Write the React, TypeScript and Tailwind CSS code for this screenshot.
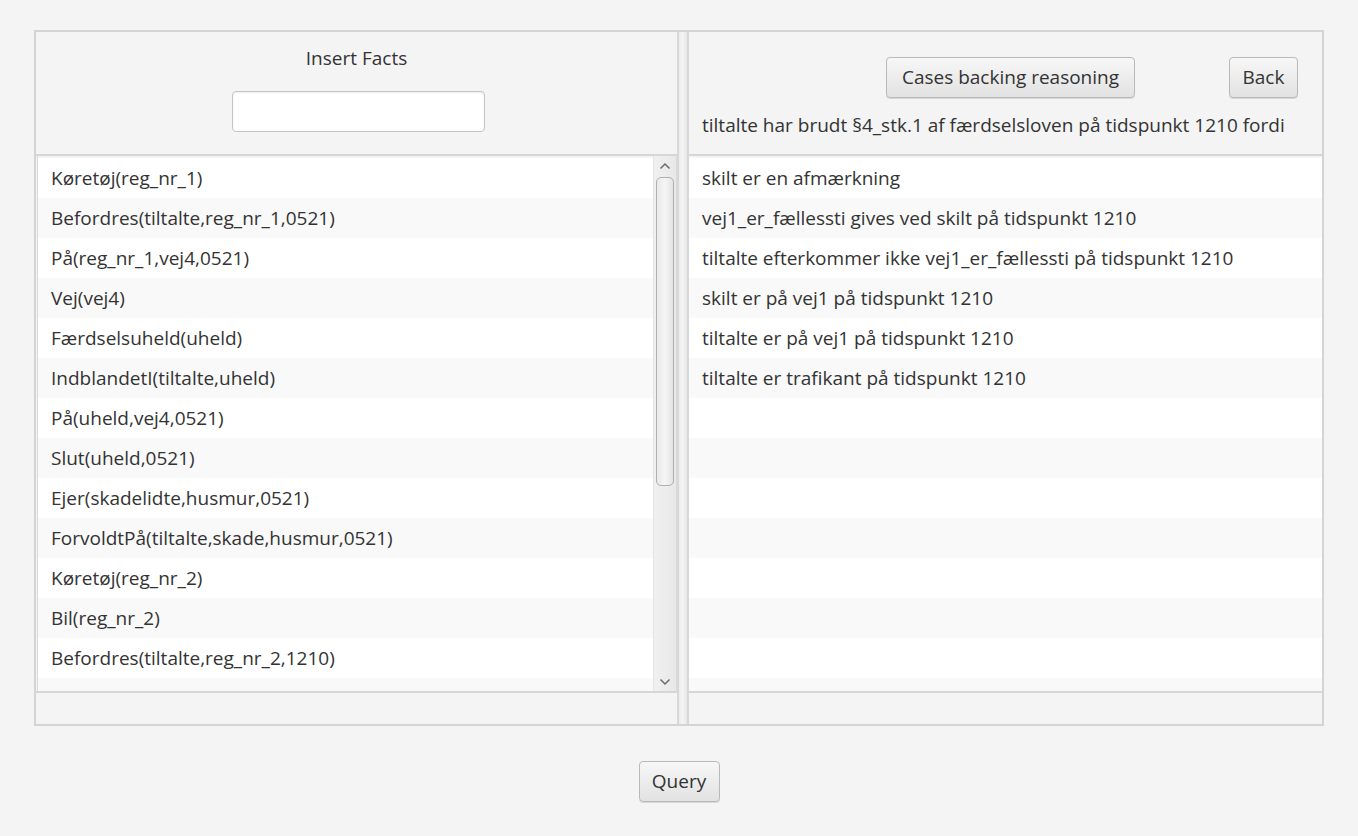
const facts = [
  'Køretøj(reg_nr_1)',
  'Befordres(tiltalte,reg_nr_1,0521)',
  'På(reg_nr_1,vej4,0521)',
  'Vej(vej4)',
  'Færdselsuheld(uheld)',
  'IndblandetI(tiltalte,uheld)',
  'På(uheld,vej4,0521)',
  'Slut(uheld,0521)',
  'Ejer(skadelidte,husmur,0521)',
  'ForvoldtPå(tiltalte,skade,husmur,0521)',
  'Køretøj(reg_nr_2)',
  'Bil(reg_nr_2)',
  'Befordres(tiltalte,reg_nr_2,1210)',
  '',
]

const reasons = [
  'skilt er en afmærkning',
  'vej1_er_fællessti gives ved skilt på tidspunkt 1210',
  'tiltalte efterkommer ikke vej1_er_fællessti på tidspunkt 1210',
  'skilt er på vej1 på tidspunkt 1210',
  'tiltalte er på vej1 på tidspunkt 1210',
  'tiltalte er trafikant på tidspunkt 1210',
  '', '', '', '', '', '', '', '',
]

function FxButton({ label, className = '' }: { label: string; className?: string }) {
  return (
    <button
      className={`h-[41px] rounded-[4px] border border-[#b9b9b9] bg-gradient-to-b from-[#f7f7f7] to-[#e2e2e2] text-[19px] text-[#333] shadow-[0_1px_0_#d8d8d8] ${className}`}
    >
      {label}
    </button>
  )
}

function Rows({ items }: { items: string[] }) {
  return (
    <div className="flex min-w-0 flex-1 flex-col overflow-hidden pt-[2px]">
      {items.map((t, i) => (
        <div
          key={i}
          className={`h-[40px] shrink-0 pl-[13px] leading-[40px] whitespace-nowrap ${i % 2 ? 'bg-[#f9f9f9]' : 'bg-white'}`}
        >
          {t}
        </div>
      ))}
    </div>
  )
}

function ScrollBar() {
  return (
    <div className="flex w-[23px] shrink-0 flex-col items-center border-l border-[#e4e4e4] bg-gradient-to-r from-[#f0f0f0] to-[#e8e8e8]">
      <svg width="12" height="8" viewBox="0 0 12 8" className="mt-[6px]">
        <path d="M1.5 6.5 L6 2 L10.5 6.5" fill="none" stroke="#6a6a6a" strokeWidth="1.5" />
      </svg>
      <div className="mt-[7px] h-[309px] w-[18px] rounded-[5px] border border-[#b0b0b0] bg-gradient-to-r from-[#e9e9e9] via-[#f5f5f5] to-[#e3e3e3]" />
      <div className="flex-1" />
      <svg width="12" height="8" viewBox="0 0 12 8" className="mb-[5px]">
        <path d="M1.5 1.5 L6 6 L10.5 1.5" fill="none" stroke="#6a6a6a" strokeWidth="1.5" />
      </svg>
    </div>
  )
}

export default function App() {
  return (
    <div
      className="h-[836px] w-[1358px] bg-[#f4f4f4] pt-[30px] pl-[34px] text-[19px] text-[#333]"
      style={{ fontFamily: '"Open Sans", "Noto Sans", sans-serif' }}
    >
      <div className="flex h-[696px] w-[1290px] border-2 border-[#d4d4d4]">
        {/* left pane */}
        <div className="flex w-[641px] flex-col">
          <div className="flex h-[124px] flex-col items-center border-b-2 border-[#d6d6d6]">
            <p className="mt-[13px] leading-[26px]">Insert Facts</p>
            <input className="mt-[20px] ml-[4px] h-[41px] w-[253px] rounded-[4px] border border-[#c4c4c4] bg-white shadow-[inset_0_1px_2px_rgba(0,0,0,0.08)] outline-none" />
          </div>
          <div className="ml-[1px] flex h-[535px] border-x border-[#dadada]">
            <Rows items={facts} />
            <ScrollBar />
          </div>
          <div className="flex-1 border-t-2 border-[#d6d6d6]" />
        </div>

        {/* divider */}
        <div className="w-[12px] shrink-0 border-x-2 border-[#d8d8d8] bg-gradient-to-r from-[#ececec] via-[#f4f4f4] to-[#e6e6e6]" />

        {/* right pane */}
        <div className="flex min-w-0 flex-1 flex-col">
          <div className="flex h-[124px] flex-col border-b-2 border-[#d6d6d6]">
            <div className="mt-[25px] flex items-center">
              <FxButton label="Cases backing reasoning" className="ml-[197px] w-[249px]" />
              <FxButton label="Back" className="ml-[94px] w-[69px]" />
            </div>
            <p className="mt-[14px] pl-[13px] leading-[26px] whitespace-nowrap">
              tiltalte har brudt §4_stk.1 af færdselsloven på tidspunkt 1210 fordi
            </p>
          </div>
          <div className="flex h-[535px]">
            <Rows items={reasons} />
          </div>
          <div className="flex-1 border-t-2 border-[#d6d6d6]" />
        </div>
      </div>
      <div className="flex justify-center pr-[34px] pt-[35px]">
        <FxButton label="Query" className="w-[81px]" />
      </div>
    </div>
  )
}
